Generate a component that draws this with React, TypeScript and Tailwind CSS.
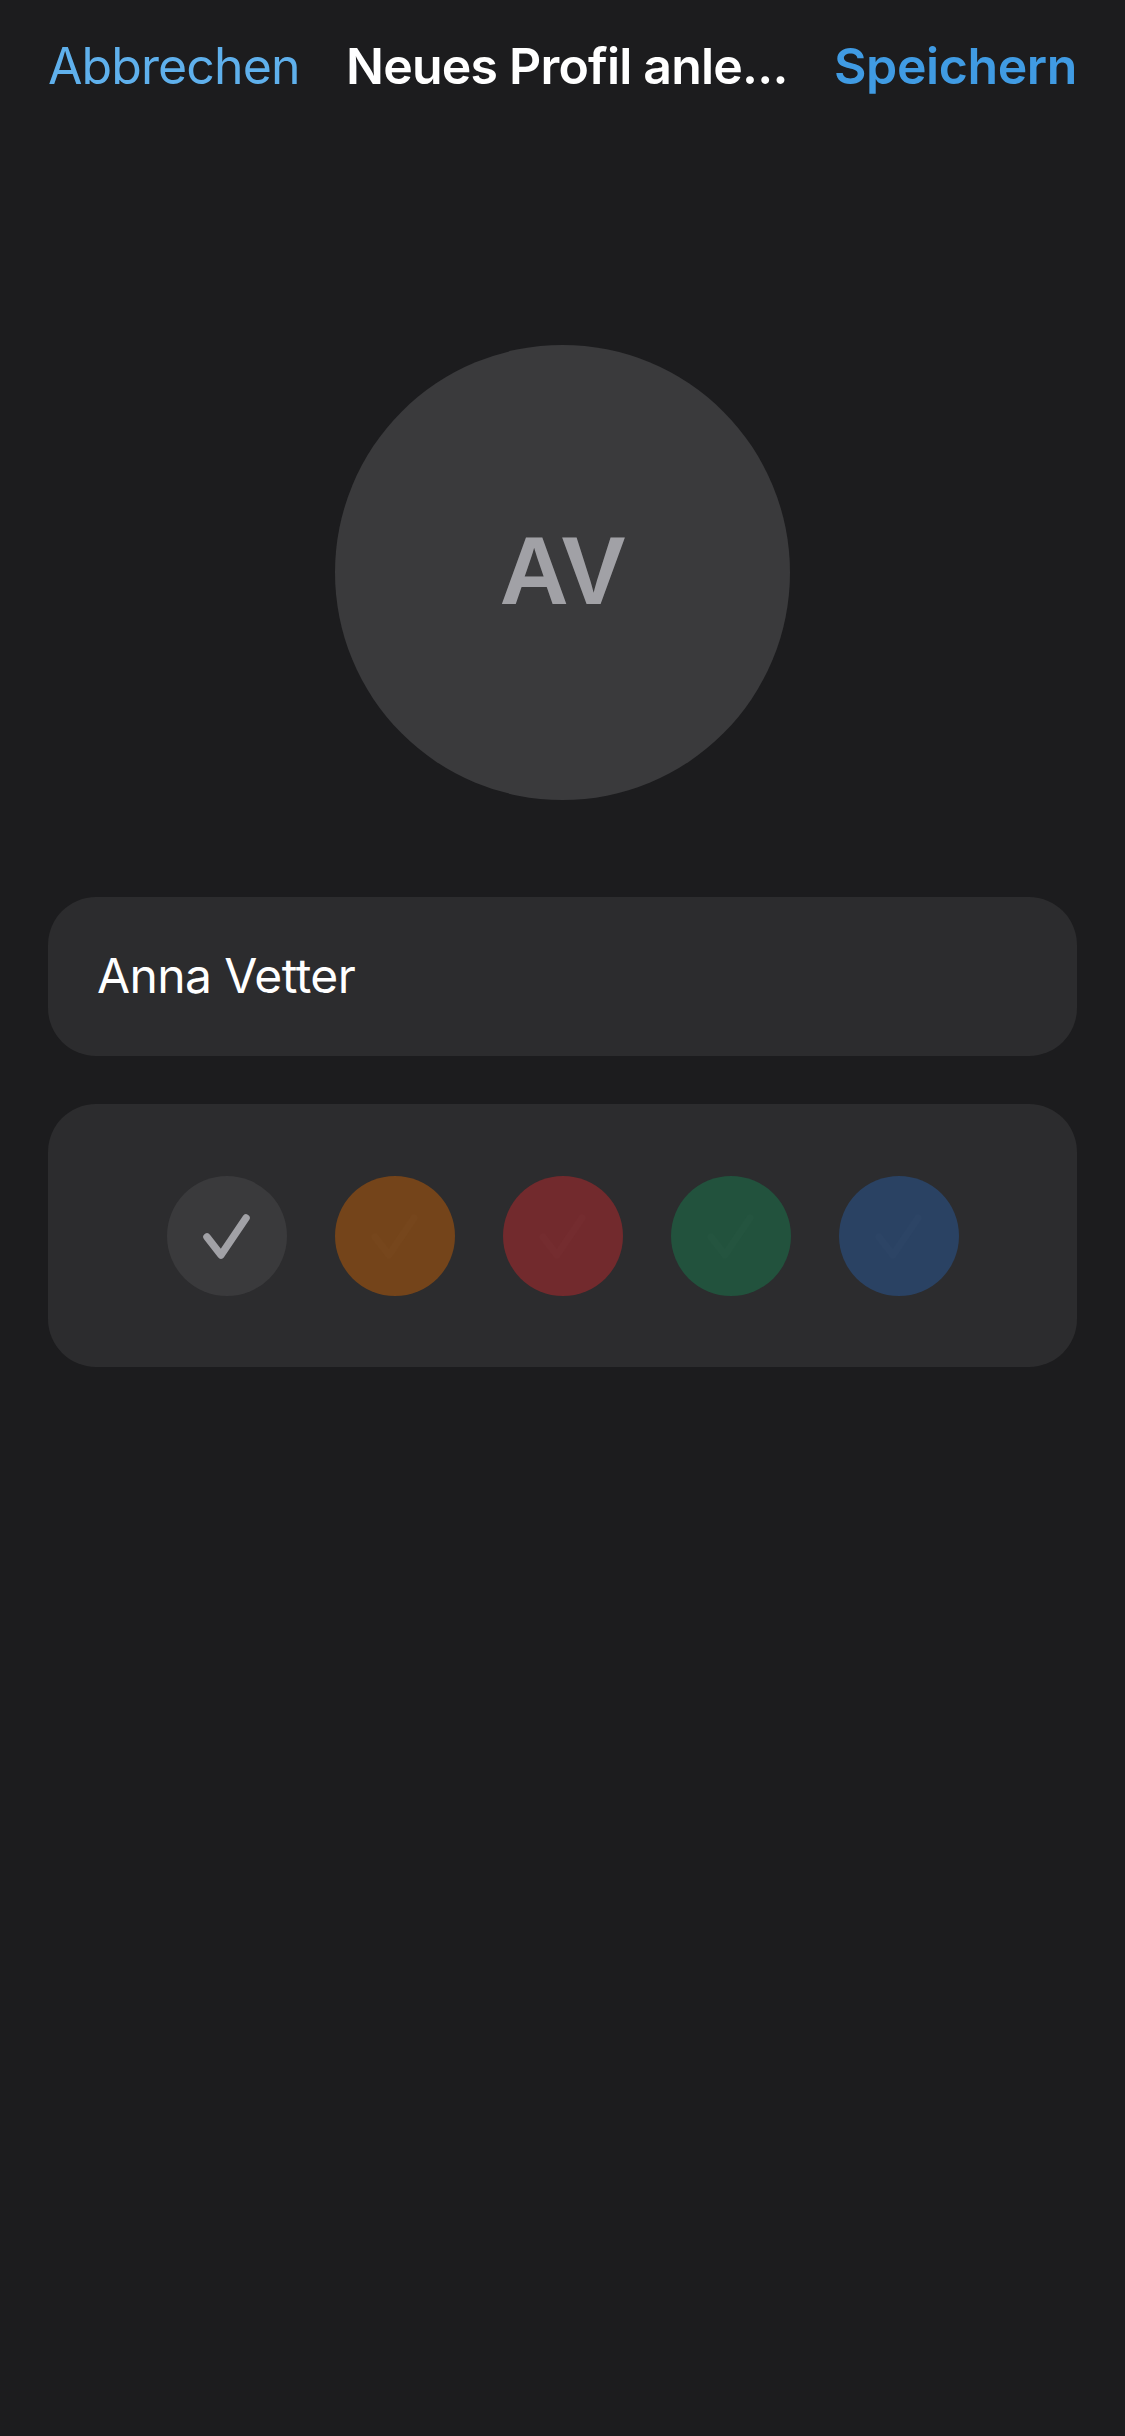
import React from 'react';

const swatches = [
  { bg: 'bg-[#3a3a3c]', check: 'text-[#a1a1a6]' },
  { bg: 'bg-[#74441a]', check: 'text-[#76461c]' },
  { bg: 'bg-[#722a2d]', check: 'text-[#742c2f]' },
  { bg: 'bg-[#22523d]', check: 'text-[#24543f]' },
  { bg: 'bg-[#2a4263]', check: 'text-[#2c4465]' },
];

function Check({ className }: { className: string }) {
  return (
    <svg viewBox="0 0 120 120" className={`h-[120px] w-[120px] ${className}`} fill="none">
      <path
        d="M40 61 L54 79 L79 42"
        stroke="currentColor"
        strokeWidth={7.5}
        strokeLinecap="round"
        strokeLinejoin="round"
      />
    </svg>
  );
}

export default function App() {
  return (
    <div
      className="min-h-[2436px] w-[1125px] bg-[#1c1c1e] px-[48px]"
      style={{ fontFamily: 'Inter, "Noto Sans", sans-serif' }}
    >
      {/* nav bar */}
      <div className="flex h-[134px] items-center justify-between pb-[2px]">
        <button className="text-[50px] leading-none tracking-[-0.9px] text-[#5fb0ec]">Abbrechen</button>
        <div className="text-[50px] font-semibold leading-none tracking-[-0.8px] text-white">Neues Profil anle...</div>
        <button className="text-[50px] font-semibold leading-none tracking-[-0.4px] text-[#409be3]">Speichern</button>
      </div>

      {/* avatar */}
      <div className="mt-[211px] flex justify-center">
        <div className="flex h-[455px] w-[455px] items-center justify-center rounded-full bg-[#3a3a3c]">
          <span
            className="pb-[4px] text-[96px] font-bold leading-none text-[#a1a1a6]"
            style={{ fontFamily: '"Liberation Sans", Arial, sans-serif' }}
          >
            AV
          </span>
        </div>
      </div>

      {/* name field */}
      <div className="mt-[97px] flex h-[159px] items-center rounded-[48px] bg-[#2c2c2e] px-[49px]">
        <span className="pb-[2px] text-[48px] leading-none tracking-[-0.6px] text-white">Anna Vetter</span>
      </div>

      {/* colour picker */}
      <div className="mt-[48px] flex h-[263px] items-center justify-center gap-[48px] rounded-[48px] bg-[#2c2c2e]">
        {swatches.map((s, i) => (
          <div key={i} className={`flex h-[120px] w-[120px] items-center justify-center rounded-full ${s.bg}`}>
            <Check className={s.check} />
          </div>
        ))}
      </div>
    </div>
  );
}
